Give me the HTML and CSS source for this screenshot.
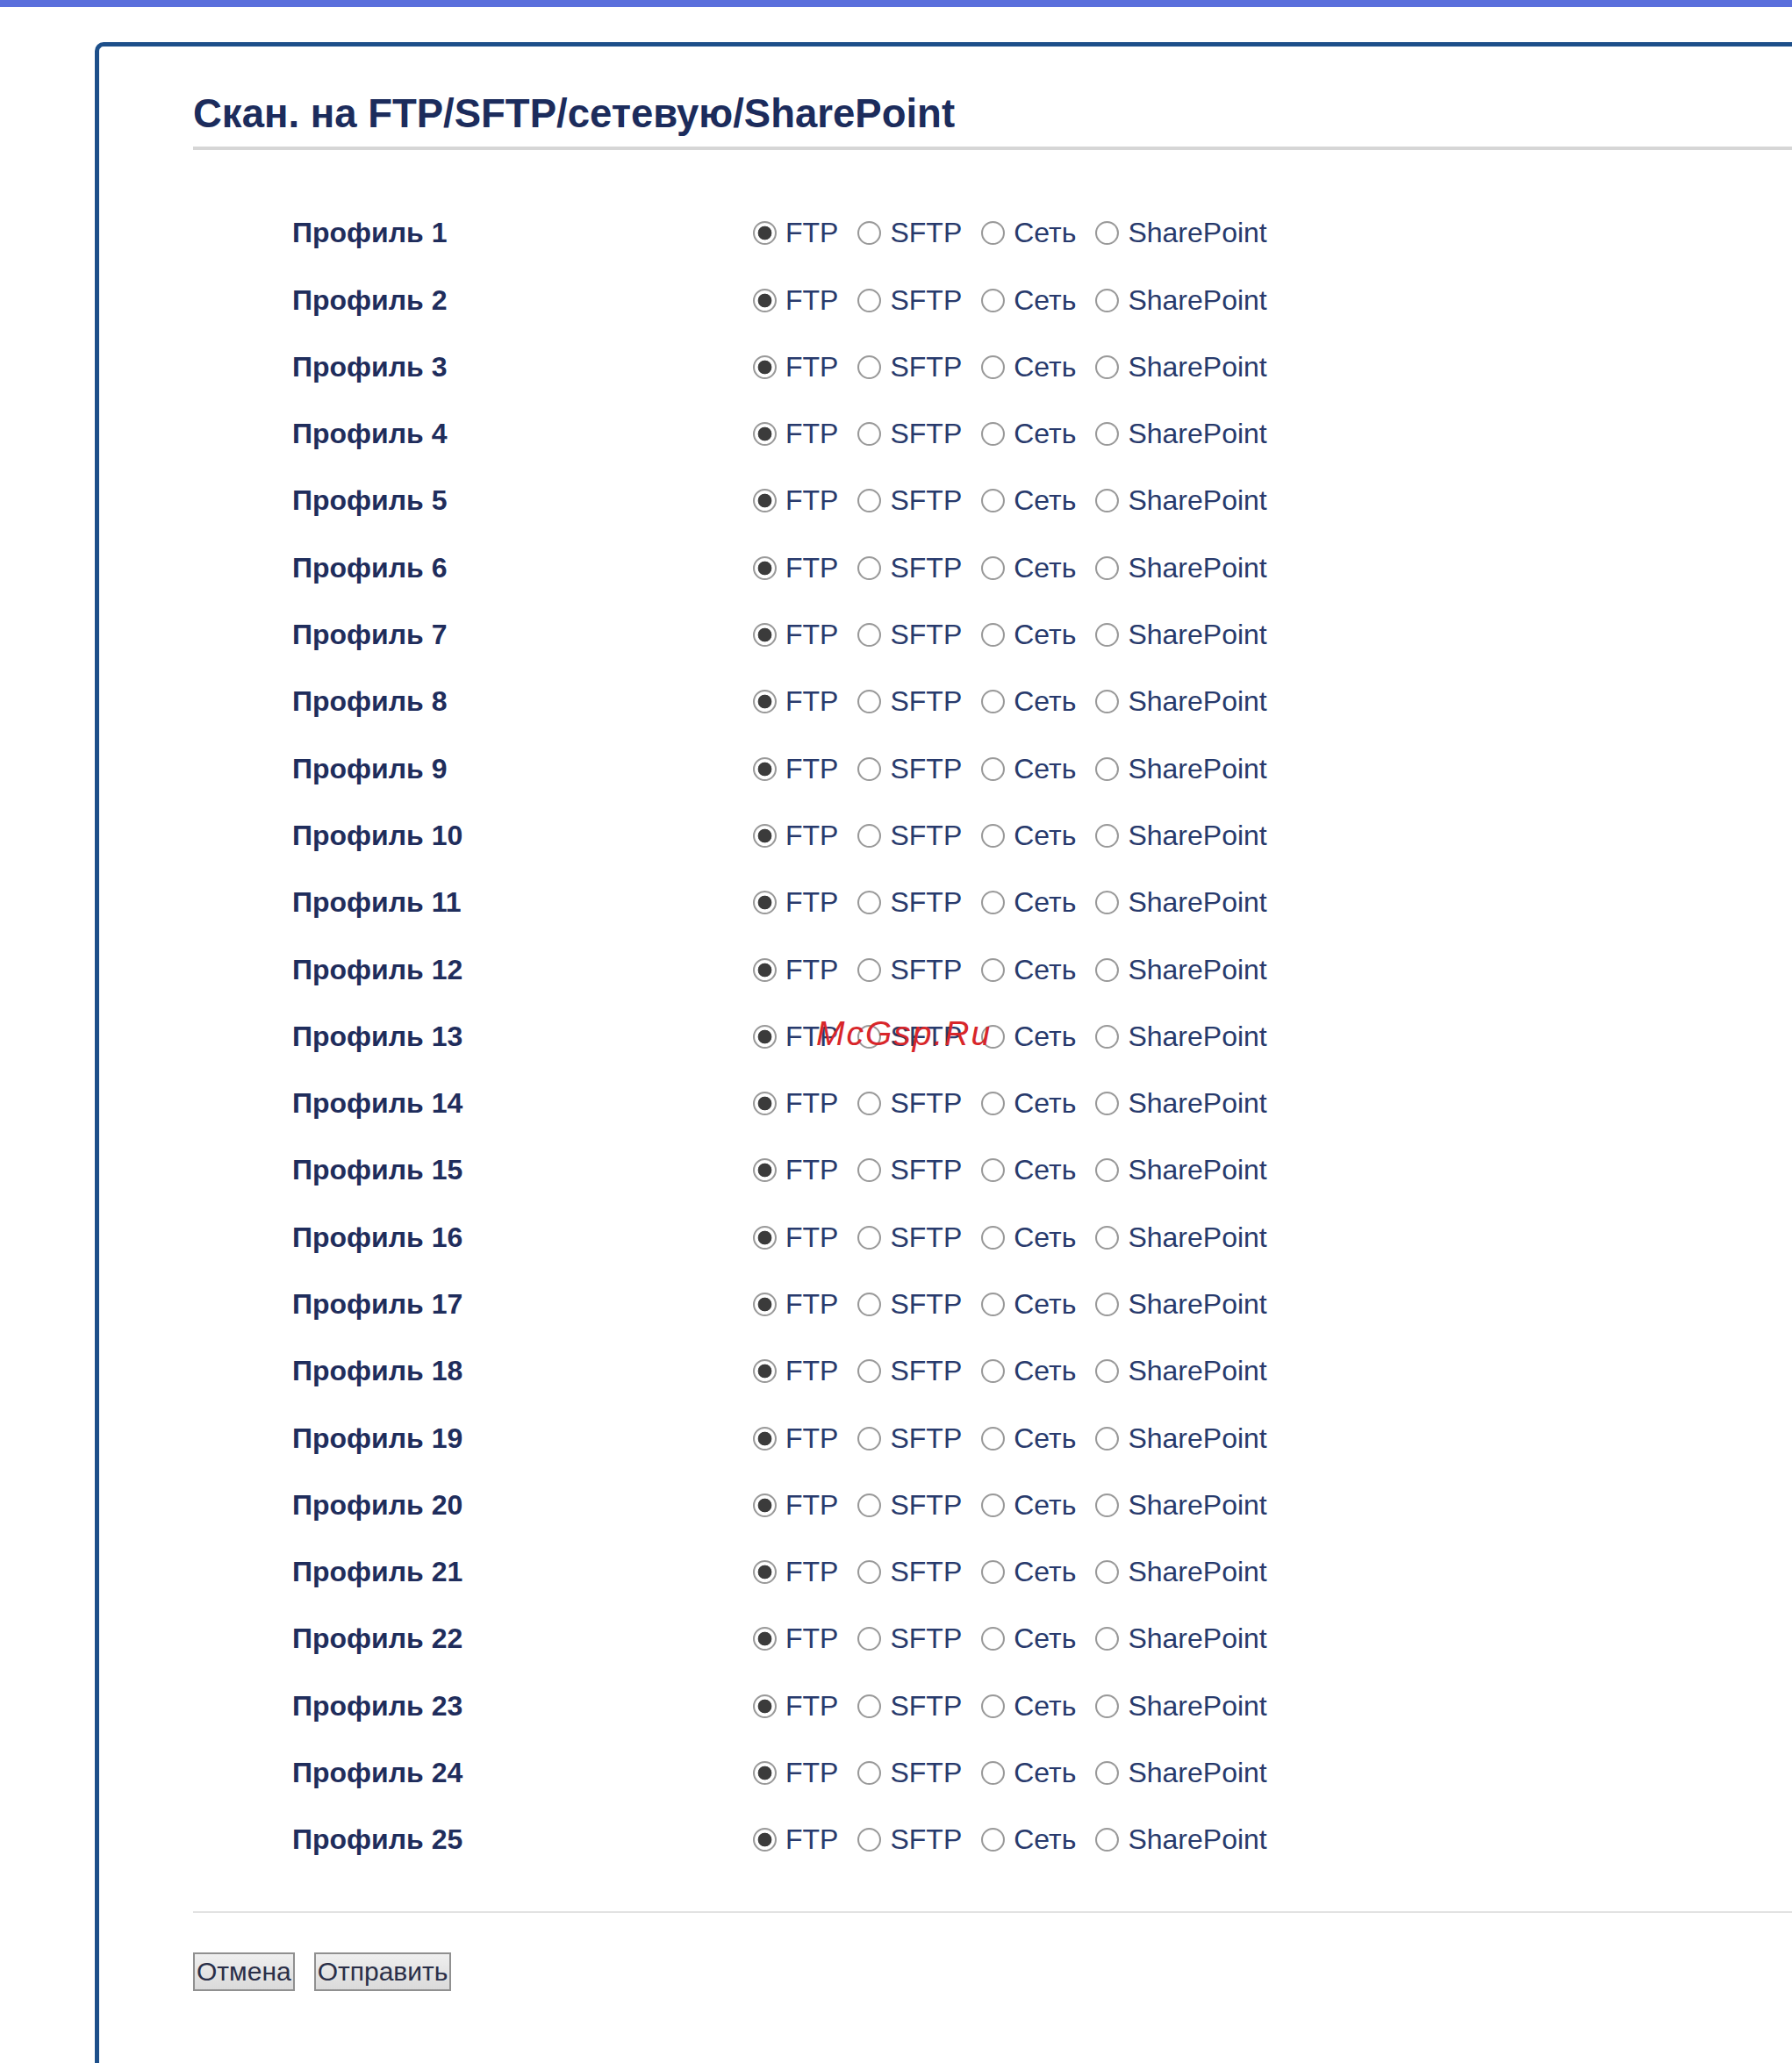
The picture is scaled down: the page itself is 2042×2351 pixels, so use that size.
FILE: index.html
```html
<!DOCTYPE html>
<html lang="ru">
<head>
  <meta charset="UTF-8">
  <title>Скан. на FTP/SFTP/сетевую/SharePoint</title>
  <link rel="stylesheet" href="styles.css">
</head>
<body>
  <div class="top-bar"></div>
  <div class="panel">
    <h1>Скан. на FTP/SFTP/сетевую/SharePoint</h1>
    <div class="profiles">
      <div class="row"><span class="name">Профиль 1</span><div class="opts"><label><input type="radio" name="p1" checked>FTP</label><label><input type="radio" name="p1">SFTP</label><label><input type="radio" name="p1">Сеть</label><label><input type="radio" name="p1">SharePoint</label></div></div>
      <div class="row"><span class="name">Профиль 2</span><div class="opts"><label><input type="radio" name="p2" checked>FTP</label><label><input type="radio" name="p2">SFTP</label><label><input type="radio" name="p2">Сеть</label><label><input type="radio" name="p2">SharePoint</label></div></div>
      <div class="row"><span class="name">Профиль 3</span><div class="opts"><label><input type="radio" name="p3" checked>FTP</label><label><input type="radio" name="p3">SFTP</label><label><input type="radio" name="p3">Сеть</label><label><input type="radio" name="p3">SharePoint</label></div></div>
      <div class="row"><span class="name">Профиль 4</span><div class="opts"><label><input type="radio" name="p4" checked>FTP</label><label><input type="radio" name="p4">SFTP</label><label><input type="radio" name="p4">Сеть</label><label><input type="radio" name="p4">SharePoint</label></div></div>
      <div class="row"><span class="name">Профиль 5</span><div class="opts"><label><input type="radio" name="p5" checked>FTP</label><label><input type="radio" name="p5">SFTP</label><label><input type="radio" name="p5">Сеть</label><label><input type="radio" name="p5">SharePoint</label></div></div>
      <div class="row"><span class="name">Профиль 6</span><div class="opts"><label><input type="radio" name="p6" checked>FTP</label><label><input type="radio" name="p6">SFTP</label><label><input type="radio" name="p6">Сеть</label><label><input type="radio" name="p6">SharePoint</label></div></div>
      <div class="row"><span class="name">Профиль 7</span><div class="opts"><label><input type="radio" name="p7" checked>FTP</label><label><input type="radio" name="p7">SFTP</label><label><input type="radio" name="p7">Сеть</label><label><input type="radio" name="p7">SharePoint</label></div></div>
      <div class="row"><span class="name">Профиль 8</span><div class="opts"><label><input type="radio" name="p8" checked>FTP</label><label><input type="radio" name="p8">SFTP</label><label><input type="radio" name="p8">Сеть</label><label><input type="radio" name="p8">SharePoint</label></div></div>
      <div class="row"><span class="name">Профиль 9</span><div class="opts"><label><input type="radio" name="p9" checked>FTP</label><label><input type="radio" name="p9">SFTP</label><label><input type="radio" name="p9">Сеть</label><label><input type="radio" name="p9">SharePoint</label></div></div>
      <div class="row"><span class="name">Профиль 10</span><div class="opts"><label><input type="radio" name="p10" checked>FTP</label><label><input type="radio" name="p10">SFTP</label><label><input type="radio" name="p10">Сеть</label><label><input type="radio" name="p10">SharePoint</label></div></div>
      <div class="row"><span class="name">Профиль 11</span><div class="opts"><label><input type="radio" name="p11" checked>FTP</label><label><input type="radio" name="p11">SFTP</label><label><input type="radio" name="p11">Сеть</label><label><input type="radio" name="p11">SharePoint</label></div></div>
      <div class="row"><span class="name">Профиль 12</span><div class="opts"><label><input type="radio" name="p12" checked>FTP</label><label><input type="radio" name="p12">SFTP</label><label><input type="radio" name="p12">Сеть</label><label><input type="radio" name="p12">SharePoint</label></div></div>
      <div class="row"><span class="name">Профиль 13</span><div class="opts"><label><input type="radio" name="p13" checked>FTP</label><label><input type="radio" name="p13">SFTP</label><label><input type="radio" name="p13">Сеть</label><label><input type="radio" name="p13">SharePoint</label></div></div>
      <div class="row"><span class="name">Профиль 14</span><div class="opts"><label><input type="radio" name="p14" checked>FTP</label><label><input type="radio" name="p14">SFTP</label><label><input type="radio" name="p14">Сеть</label><label><input type="radio" name="p14">SharePoint</label></div></div>
      <div class="row"><span class="name">Профиль 15</span><div class="opts"><label><input type="radio" name="p15" checked>FTP</label><label><input type="radio" name="p15">SFTP</label><label><input type="radio" name="p15">Сеть</label><label><input type="radio" name="p15">SharePoint</label></div></div>
      <div class="row"><span class="name">Профиль 16</span><div class="opts"><label><input type="radio" name="p16" checked>FTP</label><label><input type="radio" name="p16">SFTP</label><label><input type="radio" name="p16">Сеть</label><label><input type="radio" name="p16">SharePoint</label></div></div>
      <div class="row"><span class="name">Профиль 17</span><div class="opts"><label><input type="radio" name="p17" checked>FTP</label><label><input type="radio" name="p17">SFTP</label><label><input type="radio" name="p17">Сеть</label><label><input type="radio" name="p17">SharePoint</label></div></div>
      <div class="row"><span class="name">Профиль 18</span><div class="opts"><label><input type="radio" name="p18" checked>FTP</label><label><input type="radio" name="p18">SFTP</label><label><input type="radio" name="p18">Сеть</label><label><input type="radio" name="p18">SharePoint</label></div></div>
      <div class="row"><span class="name">Профиль 19</span><div class="opts"><label><input type="radio" name="p19" checked>FTP</label><label><input type="radio" name="p19">SFTP</label><label><input type="radio" name="p19">Сеть</label><label><input type="radio" name="p19">SharePoint</label></div></div>
      <div class="row"><span class="name">Профиль 20</span><div class="opts"><label><input type="radio" name="p20" checked>FTP</label><label><input type="radio" name="p20">SFTP</label><label><input type="radio" name="p20">Сеть</label><label><input type="radio" name="p20">SharePoint</label></div></div>
      <div class="row"><span class="name">Профиль 21</span><div class="opts"><label><input type="radio" name="p21" checked>FTP</label><label><input type="radio" name="p21">SFTP</label><label><input type="radio" name="p21">Сеть</label><label><input type="radio" name="p21">SharePoint</label></div></div>
      <div class="row"><span class="name">Профиль 22</span><div class="opts"><label><input type="radio" name="p22" checked>FTP</label><label><input type="radio" name="p22">SFTP</label><label><input type="radio" name="p22">Сеть</label><label><input type="radio" name="p22">SharePoint</label></div></div>
      <div class="row"><span class="name">Профиль 23</span><div class="opts"><label><input type="radio" name="p23" checked>FTP</label><label><input type="radio" name="p23">SFTP</label><label><input type="radio" name="p23">Сеть</label><label><input type="radio" name="p23">SharePoint</label></div></div>
      <div class="row"><span class="name">Профиль 24</span><div class="opts"><label><input type="radio" name="p24" checked>FTP</label><label><input type="radio" name="p24">SFTP</label><label><input type="radio" name="p24">Сеть</label><label><input type="radio" name="p24">SharePoint</label></div></div>
      <div class="row"><span class="name">Профиль 25</span><div class="opts"><label><input type="radio" name="p25" checked>FTP</label><label><input type="radio" name="p25">SFTP</label><label><input type="radio" name="p25">Сеть</label><label><input type="radio" name="p25">SharePoint</label></div></div>
    </div>
    <div class="actions">
      <button type="button">Отмена</button>
      <button type="button">Отправить</button>
    </div>
  </div>
  <div class="watermark">McGsp.Ru</div>
</body>
</html>
```

FILE: styles.css
```css
body {
    margin: 0;
    font-family: "Liberation Sans", Arial, sans-serif;
    background-color: #fff;
    overflow: hidden;
  }

  .top-bar {
    height: 8px;
    background-color: #5a6fdc;
  }

  .panel {
    margin: 40px 0 0 108px;
    padding: 0 0 300px 107px;
    border-top: 5px solid #1d4f8a;
    border-left: 5px solid #1d4f8a;
    border-top-left-radius: 10px;
  }

  h1 {
    margin: 0;
    padding: 51px 0 11px 0;
    font-size: 45.5px;
    line-height: 52px;
    font-weight: bold;
    color: #1c2c5c;
    border-bottom: 4px solid #d6d6d6;
  }

  .profiles {
    margin: 56.6px 0 43px 113px;
  }

  .row {
    display: flex;
    align-items: center;
    height: 76.3px;
  }

  .name {
    width: 525px;
    font-size: 32px;
    font-weight: bold;
    color: #1f2d5c;
  }

  .opts {
    display: flex;
    align-items: center;
    gap: 22px;
  }

  .opts label {
    display: flex;
    align-items: center;
    gap: 10px;
    font-size: 32px;
    color: #283a6c;
  }

  .opts input {
    appearance: none;
    -webkit-appearance: none;
    box-sizing: border-box;
    margin: 0;
    width: 27px;
    height: 27px;
    border: 2px solid #999;
    border-radius: 50%;
    background-color: #fff;
    box-shadow: inset 0 0 1px rgba(0, 0, 0, 0.15);
  }

  .opts input:checked {
    background: radial-gradient(circle, #3b3b3b 0 7.5px, #fff 8.2px);
  }

  .actions {
    border-top: 2px solid #e2e2e2;
    padding-top: 45px;
    display: flex;
    gap: 22px;
  }

  .actions button {
    height: 44px;
    padding: 0 2px;
    font-family: "Liberation Sans", Arial, sans-serif;
    font-size: 30px;
    color: #2a2f48;
    border: 2px solid #909090;
    background: linear-gradient(#efefef, #dadada);
    border-radius: 0;
  }

  .watermark {
    position: absolute;
    left: 930px;
    top: 1155px;
    font-size: 39px;
    line-height: 45px;
    font-style: italic;
    letter-spacing: 2px;
    color: #d8262a;
  }
```
